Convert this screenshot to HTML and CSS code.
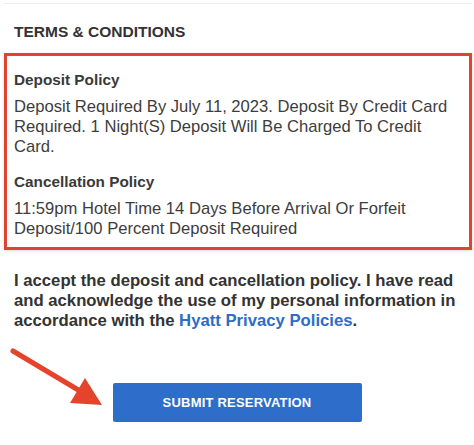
FILE: index.html
```html
<!DOCTYPE html>
<html lang="en">
<head>
  <meta charset="UTF-8" />
  <meta name="viewport" content="width=device-width, initial-scale=1.0"/>
  <title>Terms &amp; Conditions</title>
  <link rel="stylesheet" href="styles.css">
</head>
<body>
  <main class="page">
    <div class="top-rule"></div>
    <h2 class="section-title">TERMS &amp; CONDITIONS</h2>

    <section class="policy-box">
      <h3 class="policy-title">Deposit Policy</h3>
      <p class="policy-text">Deposit Required By July 11, 2023. Deposit By Credit Card Required. 1 Night(S) Deposit Will Be Charged To Credit Card.</p>
      <h3 class="policy-title">Cancellation Policy</h3>
      <p class="policy-text">11:59pm Hotel Time 14 Days Before Arrival Or Forfeit Deposit/100 Percent Deposit Required</p>
    </section>

    <p class="accept">I accept the deposit and cancellation policy. I have read and acknowledge the use of my personal information in accordance with the <a href="#">Hyatt Privacy Policies</a>.</p>

    <div class="actions">
      <svg class="pointer-arrow" width="110" height="70" viewBox="0 0 110 70" aria-hidden="true">
        <line x1="13" y1="6" x2="80" y2="46" stroke="#e5432c" stroke-width="5" stroke-linecap="round"/>
        <polygon points="85,33 70,58 102,60" fill="#e5432c"/>
      </svg>
      <button type="submit">SUBMIT RESERVATION</button>
    </div>
  </main>
</body>
</html>
```

FILE: styles.css
```css
body {
  margin: 0;
  padding: 0;
  background: #fff;
  font-family: "Liberation Sans", Arial, sans-serif;
  color: #333;
}
.page {
  padding: 0 2px 0 4px;
}
.top-rule {
  height: 1px;
  margin-top: 3px;
  background: #ececec;
}
.section-title {
  margin: 19px 10px 12px;
  font-size: 15.5px;
  font-weight: bold;
  line-height: 18px;
  color: #333;
}
.policy-box {
  border: 3px solid #df4430;
  padding: 14px 12px 8px 7px;
  box-shadow: 0 1px 3px rgba(0, 0, 0, 0.15);
}
.policy-title {
  margin: 0 0 7px;
  font-size: 15.3px;
  font-weight: bold;
  line-height: 20px;
  color: #3a3a3a;
}
.policy-text {
  margin: 0 0 15px;
  font-size: 16.6px;
  line-height: 20px;
  color: #3d3d3d;
}
.policy-text:last-child {
  margin-bottom: 0;
}
.accept {
  margin: 21px 10px 0;
  font-size: 16.7px;
  font-weight: bold;
  line-height: 20px;
  color: #333;
}
.accept a {
  color: #2f6cc4;
  text-decoration: none;
}
.actions {
  position: relative;
  display: flex;
  justify-content: center;
  margin-top: 52px;
}
.pointer-arrow {
  position: absolute;
  left: -4px;
  top: -38px;
}
button {
  width: 249px;
  height: 39px;
  margin-left: -2px;
  border: none;
  border-radius: 2px;
  background: #2e6dc9;
  color: #fff;
  font-family: "Liberation Sans", Arial, sans-serif;
  font-size: 13px;
  font-weight: bold;
  letter-spacing: 0.2px;
  cursor: pointer;
}
```
